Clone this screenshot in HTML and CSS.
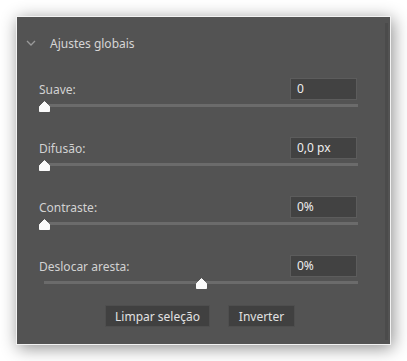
FILE: index.html
```html
<!DOCTYPE html>
<html lang="pt">
<head>
    <meta charset="UTF-8">
    <title>Ajustes globais</title>
    <link rel="stylesheet" href="styles.css">
</head>
<body>

<div class="panel">
    <div class="content">
        <!-- Section header -->
        <div class="section-head">
            <svg class="chevron" width="10" height="6" viewBox="0 0 10 6">
                <polyline points="1,1 5,5 9,1" fill="none" stroke="#9a9a9a" stroke-width="1.3"/>
            </svg>
            <span>Ajustes globais</span>
        </div>

        <div class="field">
            <div class="field-top">
                <label>Suave:</label>
                <div class="value">0</div>
            </div>
            <div class="slider">
                <div class="track"></div>
                <svg class="thumb" style="left: 0%" width="11" height="11" viewBox="0 0 11 11"><path d="M5.5 0.5 L10.5 5.5 L10.5 10.5 L0.5 10.5 L0.5 5.5 Z" fill="#fafafa" stroke="#fafafa" stroke-linejoin="round"/></svg>
            </div>
        </div>

        <div class="field">
            <div class="field-top">
                <label>Difusão:</label>
                <div class="value">0,0 px</div>
            </div>
            <div class="slider">
                <div class="track"></div>
                <svg class="thumb" style="left: 0%" width="11" height="11" viewBox="0 0 11 11"><path d="M5.5 0.5 L10.5 5.5 L10.5 10.5 L0.5 10.5 L0.5 5.5 Z" fill="#fafafa" stroke="#fafafa" stroke-linejoin="round"/></svg>
            </div>
        </div>

        <div class="field">
            <div class="field-top">
                <label>Contraste:</label>
                <div class="value">0%</div>
            </div>
            <div class="slider">
                <div class="track"></div>
                <svg class="thumb" style="left: 0%" width="11" height="11" viewBox="0 0 11 11"><path d="M5.5 0.5 L10.5 5.5 L10.5 10.5 L0.5 10.5 L0.5 5.5 Z" fill="#fafafa" stroke="#fafafa" stroke-linejoin="round"/></svg>
            </div>
        </div>

        <div class="field">
            <div class="field-top">
                <label>Deslocar aresta:</label>
                <div class="value">0%</div>
            </div>
            <div class="slider">
                <div class="track"></div>
                <svg class="thumb" style="left: 50%" width="11" height="11" viewBox="0 0 11 11"><path d="M5.5 0.5 L10.5 5.5 L10.5 10.5 L0.5 10.5 L0.5 5.5 Z" fill="#fafafa" stroke="#fafafa" stroke-linejoin="round"/></svg>
            </div>
        </div>

        <div class="actions">
            <button class="btn btn-wide">Limpar seleção</button>
            <button class="btn btn-small">Inverter</button>
        </div>
    </div>

    <!-- scrollbar strip -->
    <div class="scrollbar"></div>
</div>

</body>
</html>
```

FILE: styles.css
```css
/* Properties panel */
body {
    margin: 0;
    padding: 16px;
    background-color: #ffffff;
    font-family: "Noto Sans", "Open Sans", sans-serif;
    font-size: 12px;
}

.panel {
    display: flex;
    width: 373px;
    height: 327px;
    border: 1px solid #f2f2f2;
    background-color: #535353;
    box-shadow: 2px 3px 16px rgba(0, 0, 0, 0.45);
}

.content {
    flex: 1;
    padding: 17px 28px 0 22px;
}

.scrollbar {
    width: 3px;
    margin: 6px 2px 4px 0;
    background-color: #4b4b4b;
}

/* Header */
.section-head {
    display: flex;
    align-items: center;
    height: 18px;
    margin-left: -13px;
    color: #d6d6d6;
}

.chevron {
    margin-right: 14px;
}

/* Fields */
.field {
    margin-bottom: 25px;
}

.section-head + .field {
    margin-top: 26px;
}

.field-top {
    display: flex;
    justify-content: space-between;
    align-items: center;
    height: 22px;
}

.field-top label {
    color: #d2d2d2;
}

.value {
    box-sizing: border-box;
    width: 67px;
    height: 22px;
    padding: 3px 6px;
    background-color: #424242;
    border: 1px solid #5c5c5c;
    color: #eeeeee;
    line-height: 14px;
}

.slider {
    position: relative;
    height: 12px;
    margin-left: 5px;
    margin-right: -1px;
}

.track {
    position: relative;
    top: 4px;
    height: 3px;
    background-color: #6b6b6b;
}

.thumb {
    position: absolute;
    top: 1px;
    margin-left: -5px;
}

/* Buttons */
.actions {
    display: flex;
    justify-content: center;
    gap: 18px;
    margin-top: -9px;
    padding-left: 4px;
}

.btn {
    box-sizing: border-box;
    height: 22px;
    padding: 0;
    background-color: #404040;
    border: 1px solid #4e4e4e;
    color: #e2e2e2;
    font-family: inherit;
    font-size: 12px;
    white-space: nowrap;
}

.btn-wide {
    width: 105px;
}

.btn-small {
    width: 67px;
}
```
